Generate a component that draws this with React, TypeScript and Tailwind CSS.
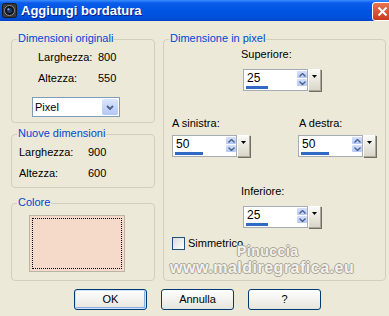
import React from 'react';

const Group: React.FC<{ title: string; className?: string; children?: React.ReactNode }> = ({ title, className, children }) => (
  <div className={`relative border border-[#D0D0BF] rounded-[4px] ${className ?? ''}`}>
    <span className="absolute left-[5px] top-[-8px] px-[1px] bg-[#ECE9D8] text-[#0046D5] leading-[13px] whitespace-nowrap">
      {title}
    </span>
    {children}
  </div>
);

const SpinArrow: React.FC<{ down?: boolean }> = ({ down }) => (
  <div className="h-[7px] bg-gradient-to-b from-[#D5E1FD] to-[#B4C8F6] rounded-[1px] flex items-center justify-center">
    <svg width="7" height="4" viewBox="0 0 7 4">
      <polyline
        points={down ? '0.5,0.5 3.5,3.5 6.5,0.5' : '0.5,3.5 3.5,0.5 6.5,3.5'}
        fill="none"
        stroke="#4D6185"
        strokeWidth="1.4"
      />
    </svg>
  </div>
);

const Spin: React.FC<{ value: string; bar: number }> = ({ value, bar }) => (
  <div className="flex w-[78px] h-[22px]">
    <div className="flex flex-col w-[65px] h-full bg-white border border-[#A5ACB2]">
      <div className="flex flex-1">
        <span className="flex-1 pl-[3px] pt-[1px] text-[12px] leading-[14px]">{value}</span>
        <div className="flex flex-col w-[10px] mt-[1px] gap-px">
          <SpinArrow />
          <SpinArrow down />
        </div>
      </div>
      <div className="h-[3px] ml-[2px] mb-[1px] bg-[#316AC5]" style={{ width: bar }} />
    </div>
    <div className="w-[13px] h-full flex justify-center pt-[5px] bg-gradient-to-b from-[#FAFAF7] to-[#DAD6C8] border border-[#ACA899] border-t-white border-l-white shadow-[1px_1px_0_#716F64]">
      <svg width="5" height="3" viewBox="0 0 5 3">
        <polygon points="0,0 5,0 2.5,3" fill="#000" />
      </svg>
    </div>
  </div>
);

const Btn: React.FC<{ label: string; def?: boolean }> = ({ label, def }) => (
  <div
    className={`w-[73px] h-[21px] rounded-[3px] border border-[#003C74] bg-gradient-to-b from-white to-[#E6E5DD] text-center leading-[19px] ${
      def ? 'shadow-[inset_0_0_0_1px_#CEE3FF,inset_-1px_-1px_0_1px_#89ADE4]' : ''
    }`}
  >
    {label}
  </div>
);

export default function App() {
  return (
    <div className="relative w-[389px] h-[316px] overflow-hidden bg-[#ECE9D8] text-[11px] text-black font-['Liberation_Sans',Arial,sans-serif]">
      {/* title bar */}
      <div className="flex items-center h-[21px] bg-[linear-gradient(180deg,#3B8DFF_0%,#0A5DEA_14%,#0054E2_50%,#0051DB_82%,#0043C8_100%)]">
        <svg className="ml-[2px]" width="15" height="15" viewBox="0 0 15 15">
          <rect x="0.5" y="0.5" width="14" height="14" rx="2" fill="#3A3A3A" stroke="#1A1A1A" />
          <circle cx="7.5" cy="7.5" r="5" fill="#111" stroke="#8A8F9A" strokeWidth="1" />
          <circle cx="7.5" cy="7.5" r="2.6" fill="#1F3C6E" />
          <circle cx="6.4" cy="6.3" r="1" fill="#8DB4F0" />
        </svg>
        <span className="ml-[4px] text-white font-bold text-[13px] leading-[16px] [text-shadow:1px_1px_0_#0A1E8C]">
          Aggiungi bordatura
        </span>
        <div className="ml-auto mr-[-4px] mt-[1px] w-[21px] h-[19px] rounded-[3px] border border-white bg-gradient-to-b from-[#E8744F] to-[#C8381A] flex items-center justify-center">
          <svg width="11" height="11" viewBox="0 0 11 11">
            <path d="M1.5 1.5 L9.5 9.5 M9.5 1.5 L1.5 9.5" stroke="#fff" strokeWidth="2" />
          </svg>
        </div>
      </div>

      <div className="flex pt-[18px] pl-[11px]">
        {/* left column */}
        <div className="flex flex-col w-[144px]">
          <Group title="Dimensioni originali" className="h-[84px]">
            <div className="pt-[7px] pl-[26px]">
              <div className="flex h-[21px] items-center">
                <span className="w-[60px]">Larghezza:</span>
                <span>800</span>
              </div>
              <div className="flex h-[21px] items-center">
                <span className="w-[60px]">Altezza:</span>
                <span>550</span>
              </div>
            </div>
            <div className="ml-[20px] mt-[8px] w-[88px] h-[20px] border border-[#7F9DB9] bg-white flex">
              <span className="flex-1 pl-[2px] leading-[18px]">Pixel</span>
              <div className="w-[16px] m-px rounded-[2px] bg-gradient-to-b from-[#DCE6FC] to-[#B3C7F5] flex items-center justify-center">
                <svg width="8" height="5" viewBox="0 0 8 5">
                  <polyline points="1,1 4,4 7,1" fill="none" stroke="#4D6185" strokeWidth="1.8" />
                </svg>
              </div>
            </div>
          </Group>

          <Group title="Nuove dimensioni" className="h-[54px] mt-[11px]">
            <div className="pt-[7px] pl-[7px]">
              <div className="flex h-[21px] items-center">
                <span className="w-[69px]">Larghezza:</span>
                <span>900</span>
              </div>
              <div className="flex h-[21px] items-center">
                <span className="w-[69px]">Altezza:</span>
                <span>600</span>
              </div>
            </div>
          </Group>

          <Group title="Colore" className="h-[78px] mt-[15px]">
            <div className="ml-[17px] mt-[11px] w-[96px] h-[57px] border border-[#B9B6A8] bg-[#F5DACA] p-[2px]">
              <div className="w-full h-full border border-dotted border-black" />
            </div>
          </Group>
        </div>

        {/* right column */}
        <Group title="Dimensione in pixel" className="ml-[8px] w-[223px] h-[242px]">
          <div className="ml-[77px] mt-[8px] leading-[13px]">Superiore:</div>
          <div className="ml-[79px] mt-[8px]">
            <Spin value="25" bar={22} />
          </div>

          <div className="flex ml-[8px] mt-[26px]">
            <div className="w-[126px]">
              <div className="leading-[13px]">A sinistra:</div>
              <div className="mt-[5px]">
                <Spin value="50" bar={28} />
              </div>
            </div>
            <div>
              <div className="ml-px leading-[13px]">A destra:</div>
              <div className="mt-[5px]">
                <Spin value="50" bar={28} />
              </div>
            </div>
          </div>

          <div className="ml-[77px] mt-[28px] leading-[13px]">Inferiore:</div>
          <div className="ml-[79px] mt-[8px]">
            <Spin value="25" bar={22} />
          </div>

          <div className="flex items-center ml-[8px] mt-[9px]">
            <div className="w-[13px] h-[13px] border border-[#1C5180] bg-gradient-to-br from-[#DCDCD7] to-white" />
            <span className="ml-[3px] leading-[13px]">Simmetrico</span>
          </div>
        </Group>
      </div>

      {/* buttons */}
      <div className="flex gap-[14px] pl-[74px] mt-[8px]">
        <Btn label="OK" def />
        <Btn label="Annulla" />
        <Btn label="?" />
      </div>

      {/* watermark */}
      <div className="absolute left-[237px] top-[242px] text-[14px] font-bold tracking-[0.5px] leading-[18px] text-[#F4F2EC] [text-shadow:1px_0_0_#A9A597,-1px_0_0_#A9A597,0_1px_0_#A9A597,0_-1px_0_#A9A597]">
        Pinuccia
      </div>
      <div className="absolute left-[170px] top-[259px] text-[16px] font-bold tracking-[0.5px] leading-[18px] text-[#F4F2EC] [text-shadow:1px_0_0_#A9A597,-1px_0_0_#A9A597,0_1px_0_#A9A597,0_-1px_0_#A9A597]">
        www.maldiregrafica.eu
      </div>
    </div>
  );
}
